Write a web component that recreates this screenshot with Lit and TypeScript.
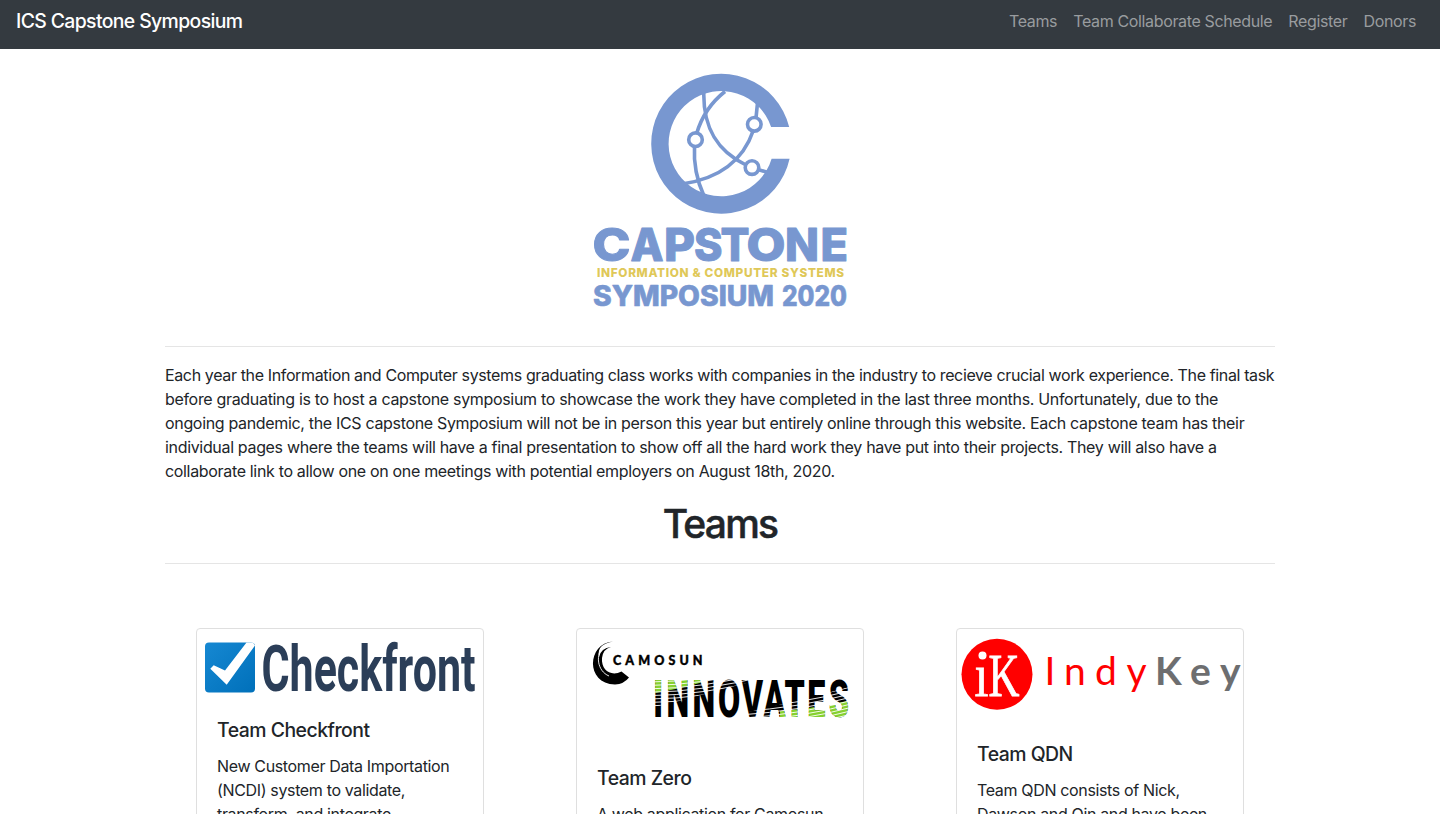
import { LitElement, html, css, svg } from "lit";
import { customElement } from "lit/decorators.js";

const NAV = ["Teams", "Team Collaborate Schedule", "Register", "Donors"];

const INTRO = [
  "Each year the Information and Computer systems graduating class works with companies in the industry to recieve crucial work experience. The final task",
  "before graduating is to host a capstone symposium to showcase the work they have completed in the last three months. Unfortunately, due to the",
  "ongoing pandemic, the ICS capstone Symposium will not be in person this year but entirely online through this website. Each capstone team has their",
  "individual pages where the teams will have a final presentation to show off all the hard work they have put into their projects. They will also have a",
  "collaborate link to allow one on one meetings with potential employers on August 18th, 2020.",
];

// Letter, left edge and advance of each glyph of the wordmark.
const WORDMARK: [string, number, number][] = [
  ["C", 592.5, 38], ["A", 630.5, 33], ["P", 664, 31], ["S", 694, 28.5],
  ["T", 720.5, 29], ["O", 746.5, 39], ["N", 785, 34], ["E", 820.5, 27.5],
];

const capstoneLogo = html`
  <svg class="hero" width="260" height="242" viewBox="590 70 260 242">
    <path fill="#7897d0" d="M789.200 127A70 70 0 1 0 789.600 158.700H771.600A52.600 52.600 0 1 1 771.100 127Z" />
    <g fill="none" stroke="#7897d0" stroke-width="3.600">
      <path d="M725 91.500Q704 108 696.500 134M694.500 146Q693 172 704 196" />
      <path d="M703.800 92C703 128 717 151 746 165M758 169.500L768 172.500" />
      <path d="M757.500 103L756 118M753.500 130Q738 176 682 184" />
      <circle cx="695.500" cy="139.700" r="6.800" /><circle cx="754.300" cy="124.300" r="6.800" /><circle cx="752" cy="167.600" r="6.800" />
    </g>
    <g font-family="Inter, sans-serif" font-weight="800" stroke-linejoin="round">
      <text y="261" font-size="45.500" stroke="#7897d0" stroke-width="1" fill="#7897d0">${WORDMARK.map(([c, x, w]) => svg`<tspan x=${x} textLength=${w} lengthAdjust="spacingAndGlyphs">${c}</tspan>`)}</text>
      <text x="597" y="277.300" font-size="11.800" textLength="247" fill="#dfc858">INFORMATION &amp; COMPUTER SYSTEMS</text>
      <text y="306" font-size="28" stroke="#7897d0" stroke-width="0.600" fill="#7897d0"><tspan x="593" textLength="181" lengthAdjust="spacingAndGlyphs">SYMPOSIUM</tspan> <tspan x="782" textLength="65" lengthAdjust="spacingAndGlyphs">2020</tspan></text>
    </g>
  </svg>`;

const checkfront = html`
  <svg width="286" height="69" viewBox="197 629 286 69">
    <defs>
      <linearGradient id="b" x1="0" y1="0" x2="1" y2="1"><stop offset="0" stop-color="#1688d2" /><stop offset="1" stop-color="#0070ba" /></linearGradient>
    </defs>
    <rect x="205" y="642.500" width="50" height="50" rx="4" fill="url(#b)" />
    <path fill="#fff" d="M210.300 668.700L213.700 665.300L225 670.500L246.500 642.500H253L255 645.500L226.700 684.700Z" />
    <text x="261.500" y="691" font-family="Roboto, sans-serif" font-weight="700" font-size="65" textLength="214" lengthAdjust="spacingAndGlyphs" fill="#2b3e58">Checkfront</text>
  </svg>`;

const STRIPES = [0, 1, 2, 3, 4, 5, 6, 7, 8, 9, 10, 11];
const INNOVATES_SCALE = 0.62;
const INNOVATES_X = [653.3, 666.5, 692.5, 718, 741.7, 763.4, 784.6, 807.3, 828.8]
  .map((x) => (x / INNOVATES_SCALE).toFixed(1))
  .join(" ");
const innovates = html`
  <svg width="286" height="117" viewBox="577 629 286 117">
    <defs>
      <clipPath id="g"><path transform="scale(1.613 1)" d="M650 678H716Q690 687 650 694ZM780 711Q815 708 832 704L852 700V720H780Z" /></clipPath>
      <clipPath id="l"><path d="M650 678H765Q720 690 690 698T650 708Z" /></clipPath>
      <clipPath id="r"><path d="M740 719V714Q775 706 800 700T852 686V719Z" /></clipPath>
    </defs>
    <path d="M613 641.500C587 643 585 684 615 684.500Q624 684 629 677.500L621.500 671.500C611 677 601 670 602 658Q603 649 611 647Q601 648 599 657C597 647 604 643 613 641.500Z" />
    <path fill="none" stroke="#fff" stroke-width="0.900" d="M604 646C595 654 597 671 609 676" />
    <text x="613" y="665" font-family="Lato, sans-serif" font-weight="900" font-size="12.500" stroke="#000" stroke-width="0.400" textLength="89.500" lengthAdjust="spacing">CAMOSUN</text>
    <g font-family="Roboto, sans-serif" font-weight="900" font-size="52" transform="scale(0.62 1)">
      <text x=${INNOVATES_X} y="716.800">INNOVATES</text>
      <text aria-hidden="true" x=${INNOVATES_X} y="716.800" fill="#86d12f" clip-path="url(#g)">INNOVATES</text>
    </g>
    <g fill="none" stroke="#fff" stroke-width="0.900" clip-path="url(#l)">
      ${STRIPES.map((i) => svg`<path d=${`M650 ${682 + i * 3.4}Q700 ${682 + i * 3.4} 770 ${665 + i * 3.4}`} />`)}
    </g>
    <g fill="none" stroke="#fff" stroke-width="0.900" clip-path="url(#r)">
      ${STRIPES.map((i) => svg`<path d=${`M740 ${698 + i * 3.4}Q800 ${694 + i * 3.4} 852 ${680 + i * 3.4}`} />`)}
    </g>
  </svg>`;

const indykey = html`
  <svg width="286" height="93" viewBox="957 629 286 93">
    <circle cx="997" cy="674.300" r="35.500" fill="#f00" />
    <circle cx="982.500" cy="655.500" r="4" fill="#fff" />
    <g font-family="Liberation Serif, serif" fill="#fff" stroke="#fff" stroke-width="0.800">
      <text x="974.500" y="695.500" font-size="62" textLength="14" lengthAdjust="spacingAndGlyphs">ı</text>
      <text x="988.500" y="695.500" font-size="61" textLength="31" lengthAdjust="spacingAndGlyphs">K</text>
    </g>
    <g font-family="Lato, sans-serif" font-size="39">
      <text y="685" x="1044.500 1064 1095 1126.500" fill="#f00">Indy</text>
      <text y="685" x="1155 1190 1220" font-weight="700" fill="#6d6e70">Key</text>
    </g>
  </svg>`;

const TEAMS = [
  { logo: checkfront, name: "Team Checkfront", lines: ["New Customer Data Importation", "(NCDI) system to validate,", "transform, and integrate"] },
  { logo: innovates, name: "Team Zero", lines: ["A web application for Camosun"] },
  { logo: indykey, name: "Team QDN", lines: ["Team QDN consists of Nick,", "Dawson and Qin and have been"] },
];

@customElement("app-root")
export class AppRoot extends LitElement {
  static styles = css`
    :host { display: block; height: 814px; overflow: hidden; background: #fff; color: #212529; font: 400 16px/24px Inter, sans-serif; letter-spacing: -0.34px; }
    * { box-sizing: border-box; }
    svg { display: block; flex: none; letter-spacing: 0; }
    nav { height: 49px; background: #343a40; padding: 1px 16px 8px; display: flex; align-items: center; justify-content: space-between; }
    .brand { font-size: 19.4px; line-height: 30px; color: #fff; letter-spacing: -0.62px; font-weight: 450; }
    .links { display: flex; letter-spacing: -0.355px; }
    .link { padding: 8px; color: #999c9f; white-space: nowrap; }
    .container { width: 1140px; margin: 0 auto; padding: 0 15px; }
    .hero { margin: 21px auto 34px; }
    hr { border: 0; border-top: 1px solid #e5e5e5; margin: 0 0 16px; }
    .line { display: block; white-space: nowrap; }
    p { margin: 0; }
    .intro { letter-spacing: -0.33px; }
    .intro .line:first-child { letter-spacing: -0.366px; }
    .intro .line:nth-child(2) { letter-spacing: -0.322px; }
    h1 { font-size: 39px; line-height: 50px; height: 48px; font-weight: 500; -webkit-text-stroke: 0.5px #212529; margin: 16px 0; text-align: center; letter-spacing: -1.8px; }
    .row { display: grid; grid-template-columns: repeat(3, 380px); justify-items: center; align-items: start; margin: 64px -15px 0; }
    .card { width: 288px; height: 400px; border: 1px solid #dfdfdf; border-radius: 4px; overflow: hidden; }
    .body { padding: 20px; }
    .body .line { letter-spacing: -0.35px; }
    h5 { font-size: 19.4px; line-height: 24px; font-weight: 500; margin: 0 0 12px; letter-spacing: -0.49px; }
  `;

  render() {
    return html`
      <nav>
        <span class="brand">ICS Capstone Symposium</span>
        <div class="links">${NAV.map((n) => html`<a class="link">${n}</a>`)}</div>
      </nav>
      <main class="container">
        ${capstoneLogo}
        <hr />
        <p class="intro">${INTRO.map((l) => html`<span class="line">${l}</span>`)}</p>
        <h1>Teams</h1>
        <hr />
        <section class="row">
          ${TEAMS.map((t) => html`
            <article class="card">
              ${t.logo}
              <div class="body">
                <h5>${t.name}</h5>
                <p>${t.lines.map((l) => html`<span class="line">${l}</span>`)}</p>
              </div>
            </article>`)}
        </section>
      </main>`;
  }
}
